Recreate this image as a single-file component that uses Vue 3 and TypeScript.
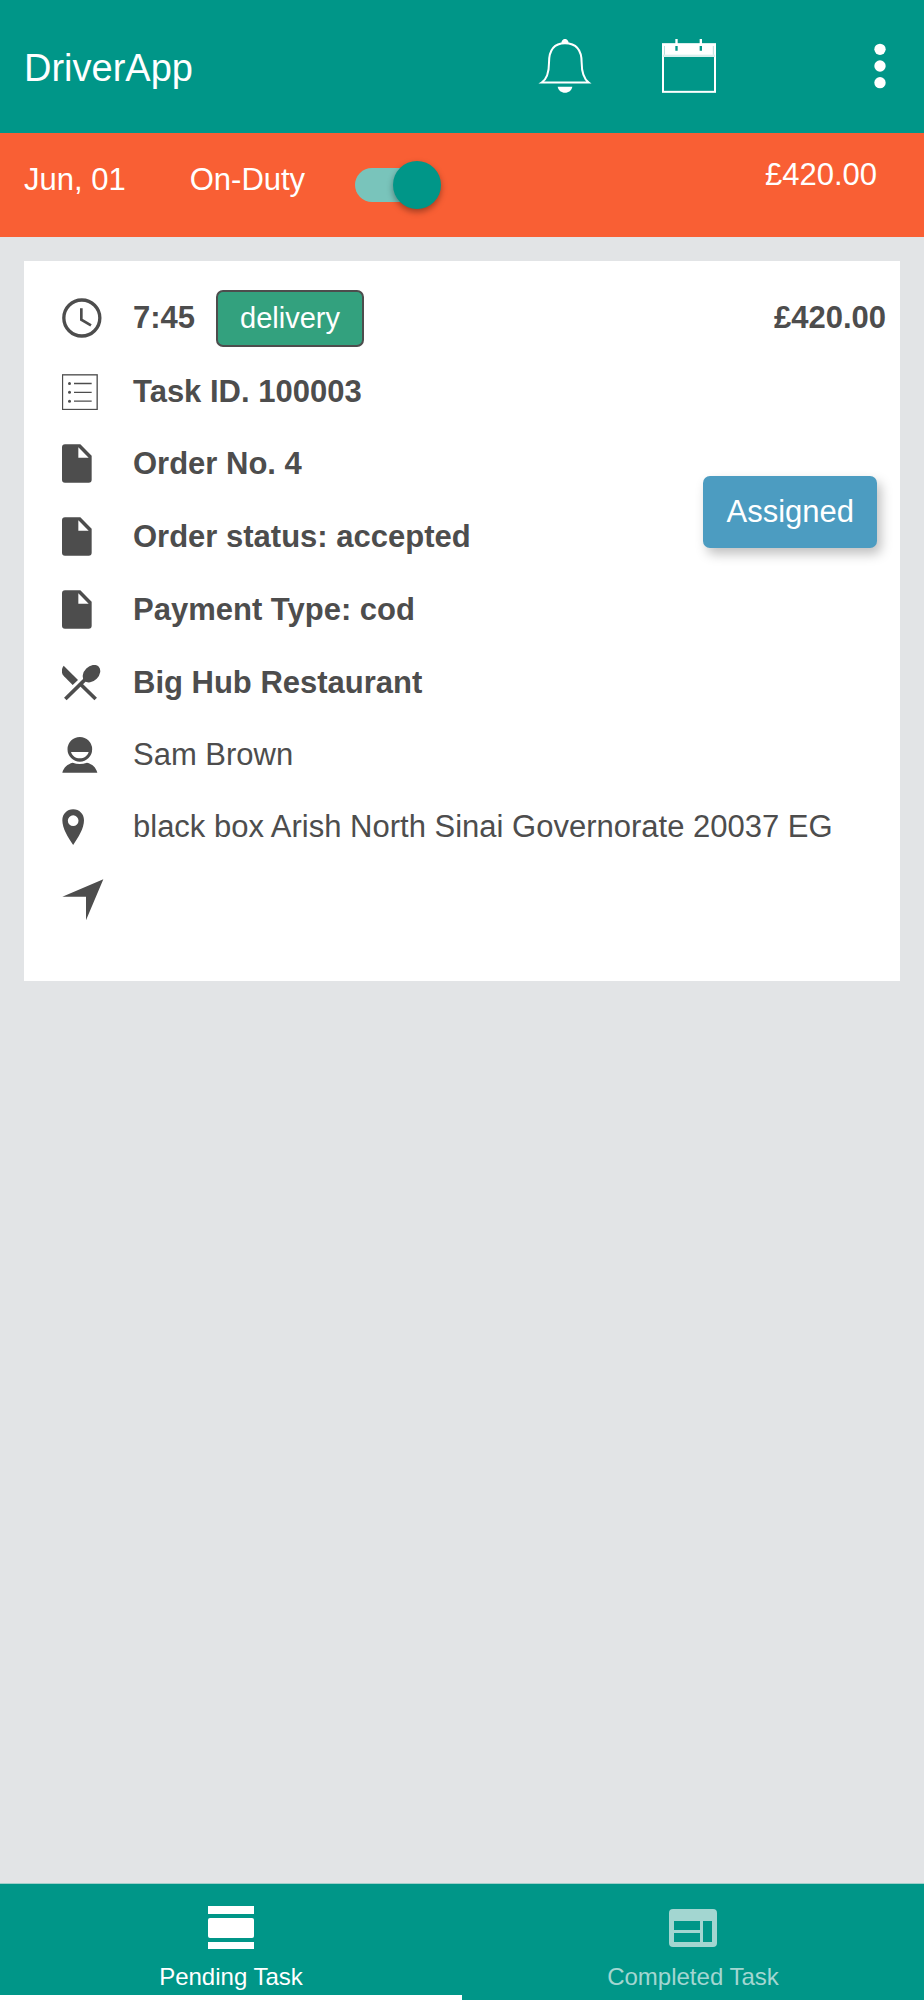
<script setup lang="ts">
import { ref } from 'vue'

type IconName = 'list' | 'file' | 'restaurant' | 'person' | 'pin' | 'navigate'

interface TaskLine {
  icon: IconName
  text: string
  strong: boolean
  tight: boolean
}

type TabId = 'pending' | 'completed'

const onDuty = ref(true)
const activeTab = ref<TabId>('pending')

const lines: TaskLine[] = [
  { icon: 'list', text: 'Task ID. 100003', strong: true, tight: true },
  { icon: 'file', text: 'Order No. 4', strong: true, tight: false },
  { icon: 'file', text: 'Order status: accepted', strong: true, tight: false },
  { icon: 'file', text: 'Payment Type: cod', strong: true, tight: false },
  { icon: 'restaurant', text: 'Big Hub Restaurant', strong: true, tight: false },
  { icon: 'person', text: 'Sam Brown', strong: false, tight: true },
  { icon: 'pin', text: 'black box Arish North Sinai Governorate 20037 EG', strong: false, tight: false },
  { icon: 'navigate', text: '', strong: false, tight: false },
]
</script>

<template>
  <div class="page">
    <header class="toolbar">
      <h1 class="title">DriverApp</h1>
      <button class="icon-button" type="button" aria-label="Notifications">
        <svg width="54" height="54" viewBox="115 117 162 162">
          <path d="M126 247.500H267C250 234 246 214 246 188C246 148 229 130 196 130C164 130 148 148 148 188C148 218 143 236 126 247.500Z" fill="none" stroke="#fff" stroke-width="6" />
          <path d="M185 131C185 112 207 112 207 131Z" fill="#fff" />
          <path d="M174 260H218C216 271 207 278 196 278C185 278 176 271 174 260Z" fill="#fff" />
        </svg>
      </button>
      <button class="icon-button calendar" type="button" aria-label="Calendar">
        <svg width="54" height="54" viewBox="486 117 162 162">
          <rect x="489" y="132.500" width="156" height="143" fill="none" stroke="#fff" stroke-width="6" />
          <rect x="489" y="132" width="156" height="33" fill="#fff" />
          <rect x="489" y="164" width="156" height="7" fill="#d9efed" />
          <path d="M493.500 138V164M640 138V164" stroke="#8fcfc8" stroke-width="2" />
          <path d="M529.500 117V134M602.500 117V134" stroke="#fff" stroke-width="7" />
          <path d="M529.500 138V152M602.500 138V152" stroke="#009688" stroke-width="7" />
        </svg>
      </button>
      <button class="icon-button more" type="button" aria-label="More">
        <svg width="12" height="46" viewBox="0 0 36 138" fill="#fff">
          <circle cx="18" cy="19" r="17" />
          <circle cx="18" cy="69" r="17" />
          <circle cx="18" cy="119" r="17" />
        </svg>
      </button>
    </header>

    <section class="duty">
      <span class="duty-text">Jun, 01</span>
      <label class="duty-text duty-label" for="duty">On-Duty</label>
      <input id="duty" v-model="onDuty" class="toggle" type="checkbox" role="switch" />
      <span class="duty-total">£420.00</span>
    </section>

    <main class="content">
      <article class="card">
        <ul class="lines">
          <li class="line first strong">
            <span class="glyph">
              <svg width="40" height="40" viewBox="185 146 120 120" fill="none" stroke="#4d4d4d">
                <circle cx="244.500" cy="206" r="54" stroke-width="10" />
                <path d="M243 177V211L272 228" stroke-width="8" />
              </svg>
            </span>
            <span>7:45</span>
            <span class="badge">delivery</span>
          </li>
          <li
            v-for="(line, index) in lines"
            :key="index"
            class="line"
            :class="{ strong: line.strong, tight: line.tight }"
          >
            <span class="glyph">
              <svg v-if="line.icon === 'list'" width="36" height="36" viewBox="185 372 108 108">
                <rect x="186.500" y="374.500" width="104" height="104" fill="none" stroke="#4d4d4d" stroke-width="4" />
                <path d="M221 400.500H274M221 427H274M221 453.500H274" stroke="#4d4d4d" stroke-width="4" />
                <g fill="#4d4d4d">
                  <circle cx="207.500" cy="400.500" r="4.500" />
                  <circle cx="207.500" cy="427" r="4.500" />
                  <circle cx="207.500" cy="453.500" r="4.500" />
                </g>
              </svg>
              <svg v-else-if="line.icon === 'file'" width="30" height="39" viewBox="185 581 90 117">
                <path
                  d="M194 582H240L274 616V688Q274 697 265 697H194Q185 697 185 688V591Q185 582 194 582ZM234 591V622H265Z"
                  fill="#4d4d4d"
                  fill-rule="evenodd"
                />
              </svg>
              <svg v-else-if="line.icon === 'restaurant'" width="39" height="36" viewBox="36 47 117 108">
                <g fill="#4d4d4d">
                  <path d="M41 49L84 92L68 107L42 81C34 73 33 60 41 49Z" />
                  <ellipse cx="124.500" cy="73" rx="30" ry="22" transform="rotate(-45 124.500 73)" />
                </g>
                <path d="M46 149L112 84M91 104L137 149" fill="none" stroke="#4d4d4d" stroke-width="11" />
              </svg>
              <svg v-else-if="line.icon === 'person'" width="36" height="36" viewBox="35 261 108 108">
                <path
                  d="M88.500 261A37 37 0 1 1 88.500 335A37 37 0 1 1 88.500 261ZM62 306C66 318 76 325 88.500 325C101 325 111 318 115 306Z"
                  fill="#4d4d4d"
                  fill-rule="evenodd"
                />
                <path d="M36 368C40 352 52 342 67 338Q88 346 110 338C126 342 137 352 141 368Z" fill="#4d4d4d" />
              </svg>
              <svg v-else-if="line.icon === 'pin'" width="23" height="36" viewBox="35 480 69 108">
                <path
                  d="M68.500 481C87 481 101 495 101 514C101 538 84 566 68.500 588C53 566 36 538 36 514C36 495 50 481 68.500 481ZM68.500 499A16 16 0 1 0 68.500 531A16 16 0 1 0 68.500 499Z"
                  fill="#4d4d4d"
                  fill-rule="evenodd"
                />
              </svg>
              <svg v-else width="42" height="42" viewBox="35 692 126 126">
                <path d="M36 745L159 693L107 816V745Z" fill="#4d4d4d" />
              </svg>
            </span>
            <span>{{ line.text }}</span>
          </li>
        </ul>
        <div class="side">
          <strong class="price">£420.00</strong>
          <button class="assigned" type="button">Assigned</button>
        </div>
      </article>
    </main>

    <nav class="tabs">
      <button
        class="tab"
        :class="{ active: activeTab === 'pending' }"
        type="button"
        @click="activeTab = 'pending'"
      >
        <svg width="48" height="48" viewBox="0 0 48 48" fill="currentColor">
          <rect x="1" y="2" width="46" height="8" />
          <rect x="1" y="14" width="46" height="20" rx="2" />
          <rect x="1" y="38" width="46" height="7" />
        </svg>
        <span class="tab-label">Pending Task</span>
      </button>
      <button
        class="tab"
        :class="{ active: activeTab === 'completed' }"
        type="button"
        @click="activeTab = 'completed'"
      >
        <svg width="48" height="48" viewBox="0 0 48 48" fill="currentColor">
          <path
            d="M4 5H44Q48 5 48 9V39Q48 43 44 43H4Q0 43 0 39V9Q0 5 4 5ZM5 17V26H31V17ZM5 29V38H31V29ZM34 17V38H43V17Z"
            fill-rule="evenodd"
          />
        </svg>
        <span class="tab-label">Completed Task</span>
      </button>
    </nav>
  </div>
</template>

<style>
body {
  margin: 0;
  background: #e2e4e6;
}
</style>

<style scoped>
.page {
  display: flex;
  flex-direction: column;
  min-height: 100vh;
  background: #e2e4e6;
  color: #4d4d4d;
  font-family: "Liberation Sans", Arial, Helvetica, sans-serif;
  font-size: 31px;
}

button {
  margin: 0;
  padding: 0;
  border: 0;
  background: none;
  color: inherit;
  font: inherit;
  cursor: pointer;
}

svg {
  display: block;
  flex: none;
}

.toolbar {
  box-sizing: border-box;
  display: flex;
  align-items: center;
  height: 133px;
  padding: 0 38px 1px 24px;
  background: #009688;
  color: #fff;
}

.title {
  flex: 1;
  margin: 0;
  padding-top: 4px;
  font-size: 38px;
  font-weight: 400;
}

.calendar {
  margin-left: 70px;
}

.more {
  margin-left: 158px;
}

.duty {
  box-sizing: border-box;
  display: flex;
  align-items: flex-start;
  height: 104px;
  padding: 0 47px 0 24px;
  background: #f95f34;
  color: #fff;
}

.duty-text {
  line-height: 93px;
}

.duty-label {
  margin-left: 64px;
}

.duty-total {
  margin-left: auto;
  line-height: 83px;
}

.toggle {
  appearance: none;
  display: grid;
  align-items: center;
  align-self: center;
  width: 86px;
  height: 48px;
  margin: 0 0 0 50px;
  cursor: pointer;
}

.toggle::before,
.toggle::after {
  content: "";
  grid-area: 1 / 1;
}

.toggle::before {
  width: 78px;
  height: 34px;
  border-radius: 17px;
  background: #c9c9c9;
}

.toggle::after {
  width: 48px;
  height: 48px;
  border-radius: 50%;
  background: #fff;
  box-shadow: 0 3px 6px rgba(0, 0, 0, 0.35);
}

.toggle:checked::before {
  background: #79c4bb;
}

.toggle:checked::after {
  justify-self: end;
  background: #009688;
}

.content {
  flex: 1;
  padding: 24px;
}

.card {
  display: grid;
  grid-template-columns: 1fr auto;
  padding: 19px 0 45px;
  background: #fff;
}

.lines {
  grid-area: 1 / 1 / 2 / 3;
  margin: 0;
  padding: 0 0 0 38px;
  list-style: none;
}

.line {
  display: flex;
  align-items: center;
  min-height: 73px;
}

.line.tight {
  min-height: 71px;
}

.line.first {
  min-height: 76px;
}

.strong {
  font-weight: 700;
}

.glyph {
  flex: none;
  width: 71px;
}

.badge {
  box-sizing: border-box;
  height: 57px;
  margin-left: 21px;
  padding: 0 22px;
  border: 2px solid #4d4d4d;
  border-radius: 7px;
  background: #33a17e;
  color: #fff;
  font-size: 29px;
  font-weight: 400;
  line-height: 53px;
}

.side {
  grid-area: 1 / 2;
  display: flex;
  flex-direction: column;
  align-items: flex-end;
}

.price {
  margin-right: 14px;
  line-height: 76px;
}

.assigned {
  height: 72px;
  margin: 120px 23px 0 0;
  padding: 0 23px;
  border-radius: 7px;
  background: #4c9cc1;
  color: #fff;
  box-shadow: 4px 6px 12px rgba(0, 0, 0, 0.25);
}

.tabs {
  display: flex;
  border-top: 1px solid #9fcfca;
  background: #009688;
}

.tab {
  flex: 1;
  display: flex;
  flex-direction: column;
  align-items: center;
  padding-top: 20px;
  border-bottom: 5px solid transparent;
  color: #a3d6d1;
}

.tab.active {
  border-bottom-color: #fff;
  color: #fff;
}

.tab-label {
  margin: 11px 0 4px;
  font-size: 24px;
  line-height: 28px;
}
</style>
